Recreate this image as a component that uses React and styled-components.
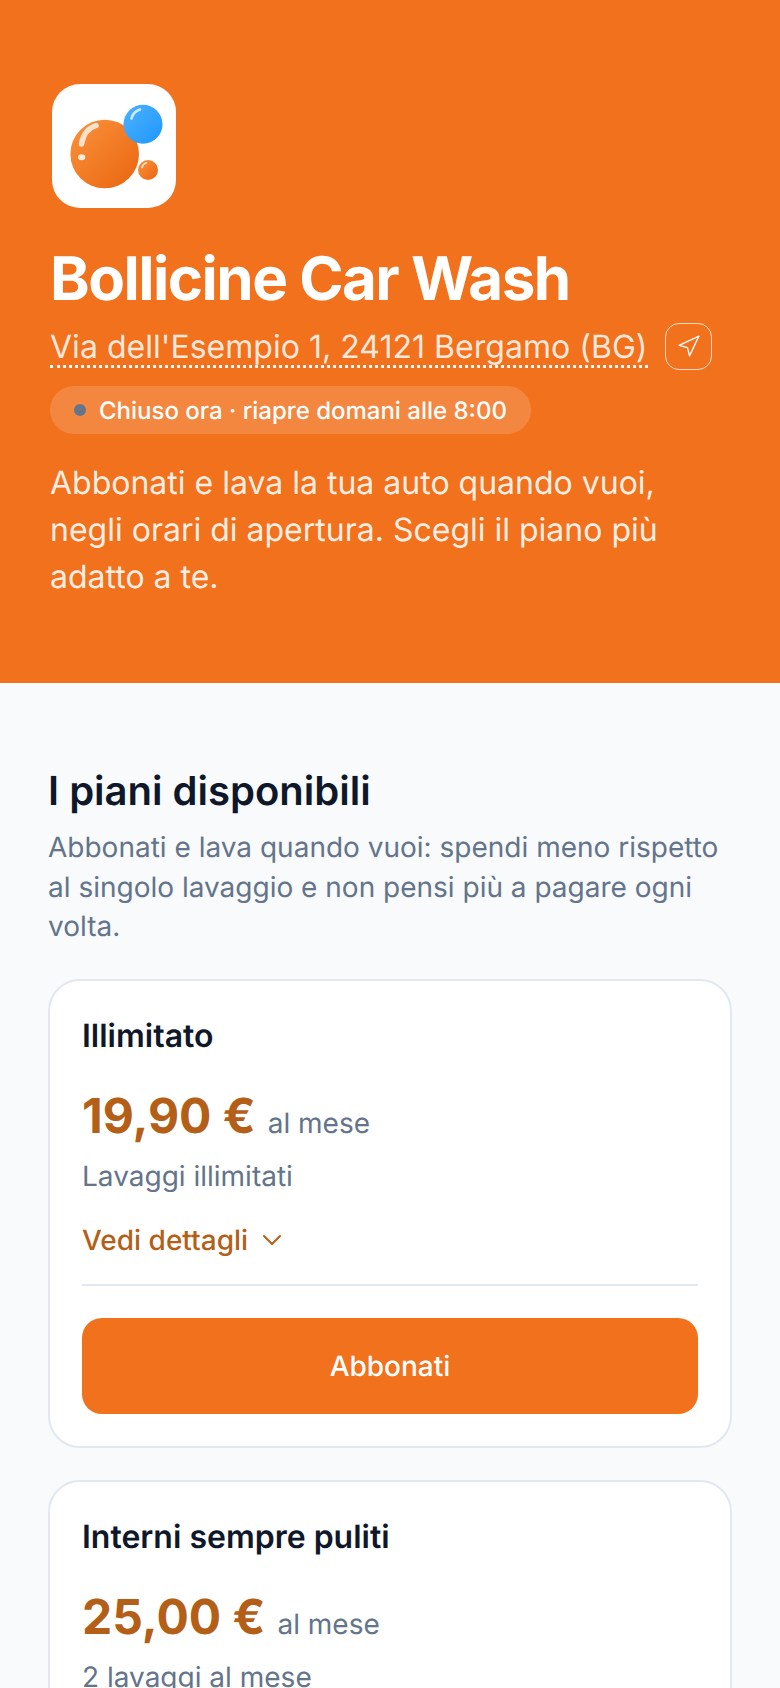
import styled, { createGlobalStyle } from "styled-components";
import { ChevronDown, Navigation } from "lucide-react";

const plans = [
  { id: 1, name: "Illimitato", price: "19,90 €", note: "Lavaggi illimitati" },
  { id: 2, name: "Interni sempre puliti", price: "25,00 €", note: "2 lavaggi al mese" },
];

function Logo() {
  return (
    <LogoBox>
      <svg width="124" height="124" viewBox="0 0 124 124">
        <defs>
          <linearGradient id="orange" x1="0" y1="0" x2="1" y2="1">
            <stop offset="0" stopColor="#fb923c" />
            <stop offset="1" stopColor="#ea650f" />
          </linearGradient>
          <linearGradient id="blue" x1="0" y1="0" x2="1" y2="1">
            <stop offset="0" stopColor="#4db2ff" />
            <stop offset="1" stopColor="#1e96fc" />
          </linearGradient>
        </defs>
        <circle cx="52.7" cy="70" r="34.3" fill="url(#orange)" />
        <circle cx="91" cy="40.3" r="19.5" fill="url(#blue)" />
        <circle cx="96" cy="86" r="10" fill="url(#orange)" />
        <path d="M29.5 60 C31 51 36 44 44 41.5" fill="none" stroke="#fff" strokeOpacity="0.75" strokeWidth="5.5" strokeLinecap="round" />
        <ellipse cx="29.7" cy="73.3" rx="3.6" ry="3" fill="#fff" fillOpacity="0.85" />
        <path d="M79.5 34.5 C80.5 30 83.5 27 88 25.5" fill="none" stroke="#fff" strokeOpacity="0.75" strokeWidth="2.6" strokeLinecap="round" />
        <path d="M90 83.5 C90.5 81 92.5 79.5 94.5 78.8" fill="none" stroke="#fff" strokeOpacity="0.75" strokeWidth="1.7" strokeLinecap="round" />
      </svg>
    </LogoBox>
  );
}

function PlanCard({ plan }) {
  return (
    <Card>
      <PlanName>{plan.name}</PlanName>
      <PriceRow>
        <Price>{plan.price}</Price>
        <Period>al mese</Period>
      </PriceRow>
      <Note>{plan.note}</Note>
      <Details>
        Vedi dettagli
        <ChevronDown size={32} strokeWidth={1.5} />
      </Details>
      <Divider />
      <Subscribe>Abbonati</Subscribe>
    </Card>
  );
}

export default function App() {
  return (
    <>
      <GlobalStyle />
      <Hero>
        <Logo />
        <Title>Bollicine Car Wash</Title>
        <AddressRow>
          <Address>Via dell'Esempio 1, 24121 Bergamo (BG)</Address>
          <MapButton>
            <Navigation size={25} strokeWidth={1.3} />
          </MapButton>
        </AddressRow>
        <Status>
          <Dot />
          Chiuso ora · riapre domani alle 8:00
        </Status>
        <Intro>
          Abbonati e lava la tua auto quando vuoi, negli orari di apertura. Scegli il piano più adatto a te.
        </Intro>
      </Hero>
      <Plans>
        <SectionTitle>I piani disponibili</SectionTitle>
        <SectionText>
          Abbonati e lava quando vuoi: spendi meno rispetto al singolo lavaggio e non pensi più a pagare ogni volta.
        </SectionText>
        <CardList>
          {plans.map((plan) => (
            <PlanCard key={plan.id} plan={plan} />
          ))}
        </CardList>
      </Plans>
    </>
  );
}

const GlobalStyle = createGlobalStyle`
  * { box-sizing: border-box; }
  html, body { margin: 0; background: #f8fafc; overflow: hidden; height: 1688px; }
  body { font-family: Inter, "Liberation Sans", sans-serif; text-rendering: geometricPrecision; }
`;

const Hero = styled.header`
  height: 683px;
  padding: 84px 50px 0;
  background: #f2711c;
  color: #fff;
`;

const LogoBox = styled.div`
  width: 124px;
  height: 124px;
  margin-left: 2px;
  border-radius: 28px;
  background: #fff;
  overflow: hidden;
`;

const Title = styled.h1`
  margin: 36px 0 0;
  font-size: 60px;
  line-height: 70px;
  font-weight: 700;
  letter-spacing: -1.5px;
`;

const AddressRow = styled.div`
  display: flex;
  align-items: center;
  gap: 17px;
  margin-top: 9px;
`;

const Address = styled.span`
  padding-top: 4px;
  font-size: 32px;
  line-height: 36px;
  letter-spacing: 0.03px;
  color: rgba(255, 255, 255, 0.85);
  border-bottom: 3px dotted #fff;
`;

const MapButton = styled.div`
  display: flex;
  align-items: center;
  justify-content: center;
  width: 47px;
  height: 47px;
  border: 1.5px solid rgba(255, 255, 255, 0.75);
  border-radius: 14px;
`;

const Status = styled.div`
  display: inline-flex;
  align-items: center;
  gap: 13px;
  height: 48px;
  margin-top: 16px;
  padding: 0 24px;
  border-radius: 24px;
  background: rgba(255, 255, 255, 0.16);
  font-size: 24px;
  font-weight: 500;
`;

const Dot = styled.span`
  width: 12px;
  height: 12px;
  border-radius: 50%;
  background: #64748b;
`;

const Intro = styled.p`
  margin: 25px 0 0;
  font-size: 32px;
  line-height: 47px;
  color: rgba(255, 255, 255, 0.9);
`;

const Plans = styled.main`
  padding: 86px 48px 48px;
`;

const SectionTitle = styled.h2`
  margin: 0;
  font-size: 40px;
  line-height: 44px;
  font-weight: 600;
  color: #0f172a;
`;

const SectionText = styled.p`
  margin: 15px 0 0;
  font-size: 28px;
  line-height: 39.5px;
  color: #64748b;
`;

const CardList = styled.div`
  display: flex;
  flex-direction: column;
  gap: 32px;
  margin-top: 32px;
`;

const Card = styled.article`
  padding: 35px 32px 32px;
  background: #fff;
  border: 2px solid #e2e8f0;
  border-radius: 32px;
`;

const PlanName = styled.h3`
  margin: 0;
  font-size: 32px;
  line-height: 40px;
  font-weight: 600;
  color: #0f172a;
`;

const PriceRow = styled.div`
  display: flex;
  align-items: baseline;
  gap: 12px;
  margin-top: 30px;
`;

const Price = styled.span`
  font-size: 48px;
  line-height: 60px;
  font-weight: 700;
  color: #b45f17;
`;

const Period = styled.span`
  font-size: 28px;
  color: #64748b;
`;

const Note = styled.p`
  margin: 10px 0 0;
  font-size: 28px;
  line-height: 40px;
  color: #64748b;
`;

const Details = styled.div`
  display: flex;
  align-items: center;
  gap: 8px;
  margin-top: 24px;
  font-size: 28px;
  line-height: 40px;
  font-weight: 500;
  color: #b45f17;
`;

const Divider = styled.hr`
  height: 2px;
  margin: 24px 0 0;
  border: 0;
  background: #e2e8f0;
`;

const Subscribe = styled.button`
  display: block;
  width: 100%;
  height: 96px;
  margin-top: 32px;
  border: 0;
  border-radius: 20px;
  background: #f2711c;
  color: #fff;
  font-family: inherit;
  font-size: 28px;
  font-weight: 500;
  text-rendering: inherit;
`;
